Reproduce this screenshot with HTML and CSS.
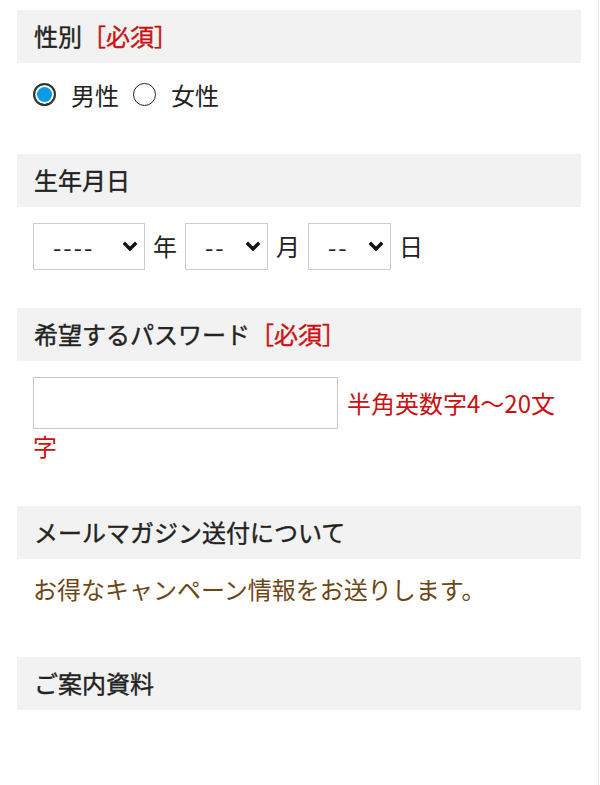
FILE: index.html
```html
<!DOCTYPE html>
<html lang="ja">
<head>
<meta charset="utf-8">
<title>登録フォーム</title>
<link rel="stylesheet" href="styles.css">
</head>
<body>
<div class="page">
  <section class="field">
    <h2 class="field-head">性別<span class="req">［必須］</span></h2>
    <div class="field-body radio-row">
      <label class="radio"><input type="radio" name="sex" checked><span>男性</span></label>
      <label class="radio"><input type="radio" name="sex"><span>女性</span></label>
    </div>
  </section>

  <section class="field">
    <h2 class="field-head">生年月日</h2>
    <div class="field-body date-row">
      <div class="selectbox sel-year">
        <select><option>----</option></select>
        <svg class="chev" width="16" height="10" viewBox="0 0 16 10"><path d="M1.8 1.8 L8 8 L14.2 1.8" fill="none" stroke="#111" stroke-width="3.4"/></svg>
      </div>
      <span class="unit">年</span>
      <div class="selectbox sel-small">
        <select><option>--</option></select>
        <svg class="chev" width="16" height="10" viewBox="0 0 16 10"><path d="M1.8 1.8 L8 8 L14.2 1.8" fill="none" stroke="#111" stroke-width="3.4"/></svg>
      </div>
      <span class="unit">月</span>
      <div class="selectbox sel-small">
        <select><option>--</option></select>
        <svg class="chev" width="16" height="10" viewBox="0 0 16 10"><path d="M1.8 1.8 L8 8 L14.2 1.8" fill="none" stroke="#111" stroke-width="3.4"/></svg>
      </div>
      <span class="unit">日</span>
    </div>
  </section>

  <section class="field">
    <h2 class="field-head">希望するパスワード<span class="req">［必須］</span></h2>
    <div class="field-body pw-body">
      <input class="text-input" type="password"><span class="hint">半角英数字4〜20文字</span>
    </div>
  </section>

  <section class="field">
    <h2 class="field-head">メールマガジン送付について</h2>
    <div class="field-body note-body">
      <p class="note">お得なキャンペーン情報をお送りします。</p>
    </div>
  </section>

  <section class="field">
    <h2 class="field-head">ご案内資料</h2>
  </section>
</div>
</body>
</html>
```

FILE: styles.css
```css
html, body {
  margin: 0;
  padding: 0;
  background: #fff;
}

body {
  font-family: "Noto Sans CJK JP", "Noto Sans", sans-serif;
  font-size: 24px;
  color: #222;
}

.page {
  width: 599px;
  min-height: 785px;
  box-sizing: border-box;
  padding: 10px 17px;
  border-right: 1px solid #ececec;
}

.field {
  margin-bottom: 38.5px;
}

.field-head {
  margin: 0;
  background: #f2f2f2;
  font-size: 24px;
  font-weight: 400;
  -webkit-text-stroke: 0.4px currentColor;
  line-height: 36.5px;
  padding: 8px 17px;
  color: #222;
}

.req {
  color: #cc1111;
}

.field-body {
  padding: 16px 16px 0;
}

/* radios */
.radio-row {
  display: flex;
  align-items: center;
  height: 37px;
  padding-top: 13px;
  padding-bottom: 3px;
}

.radio {
  display: flex;
  align-items: center;
  line-height: 37px;
  margin-right: 14px;
}

.radio input {
  appearance: none;
  -webkit-appearance: none;
  margin: 0 15px 0 0;
  width: 23px;
  height: 23px;
  border-radius: 50%;
  border: 1.5px solid #222;
  box-sizing: border-box;
  background: #fff;
}

.radio input:checked {
  border: 2px solid #333;
  background: #0a9be5;
  box-shadow: inset 0 0 0 2px #fff;
}

/* date selects */
.date-row {
  display: flex;
  align-items: center;
  gap: 8px;
}

.selectbox {
  display: flex;
  align-items: center;
  height: 47px;
  box-sizing: border-box;
  border: 1px solid #cccccc;
  background: #fff;
  padding-right: 6px;
}

.sel-year { width: 112px; }
.sel-small { width: 83px; }

.selectbox select {
  appearance: none;
  -webkit-appearance: none;
  border: none;
  background: transparent;
  flex: 1;
  min-width: 0;
  font-family: "Noto Sans CJK JP", sans-serif;
  font-size: 24px;
  letter-spacing: 2px;
  color: #222;
  padding: 0 0 0 19px;
  height: 100%;
  outline: none;
}

.chev {
  flex: none;
  display: block;
}

.unit {
  line-height: 36px;
}

/* password */
.pw-body {
  line-height: 28px;
  padding-bottom: 8px;
  color: #cc1111;
}

.text-input {
  display: inline-block;
  vertical-align: middle;
  width: 305px;
  height: 52px;
  box-sizing: border-box;
  border: 1px solid #c8c8c8;
  margin: 0 9px 0 0;
  padding: 0 8px;
  font-size: 24px;
  background: #fff;
}

.hint {
  vertical-align: middle;
}

/* mail magazine */
.note-body {
  padding-top: 12px;
  padding-bottom: 12px;
}

.note {
  margin: 0;
  line-height: 36px;
  color: #6e4616;
}
```
